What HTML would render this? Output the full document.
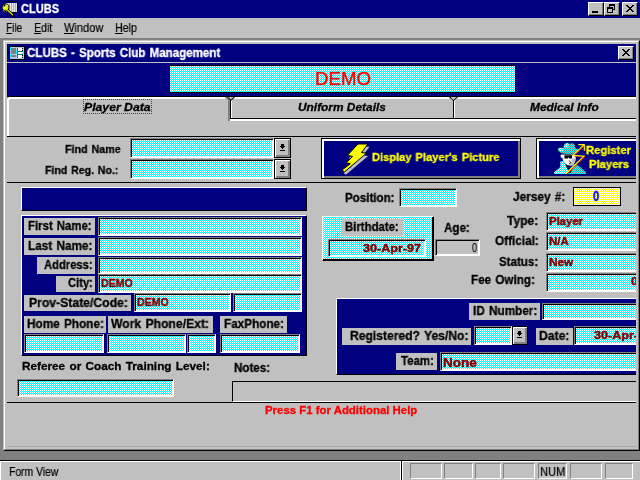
<!DOCTYPE html>
<html><head><meta charset="utf-8"><title>CLUBS</title>
<style>
html,body{margin:0;padding:0}
body{width:640px;height:480px;overflow:hidden;position:relative;background:#808080;font-family:"Liberation Sans",sans-serif;font-size:12.5px;color:#000}
div,span,svg{position:absolute;box-sizing:border-box}
.t{will-change:transform;white-space:nowrap;line-height:1;transform-origin:0 0;font-weight:bold;word-spacing:1px;-webkit-text-stroke:.3px}
.t.r{font-weight:normal;word-spacing:0;-webkit-text-stroke:.2px}
.t.bi{font-style:italic;word-spacing:0}
.t u{text-decoration:underline;text-underline-offset:1px;text-decoration-thickness:1px}
.g{background:#c0c0c0}
.n{background:#000080}
.cy{background:repeating-conic-gradient(#0ff 0% 25%,#fff 0% 50%) 0 0/2px 2px}
.ye{background:repeating-conic-gradient(#ff0 0% 25%,#fff 0% 50%) 0 0/2px 2px}
.f{border:1px solid;border-color:#808080 #fff #fff #808080;box-shadow:inset 1px 1px 0 #000,inset -1px -1px 0 #fff}
.btn{background:#c0c0c0;border:1px solid;border-color:#fff #000 #000 #fff;box-shadow:inset -1px -1px 0 #808080}
.cb{background:#c0c0c0;border:1px solid #000;box-shadow:inset 1px 1px 0 #fff,inset -2px -2px 0 #808080}
.nb{background:#000080;border:1px solid #000;box-shadow:inset 2px 2px 0 #fff,inset -2px -2px 0 #808080}
.np{background:#000080;border:1px solid;border-color:#fff #000 #000 #fff}
.sb{border:1px solid;border-color:#808080 #fff #fff #808080}
.k{background:#000}.w{background:#fff}.dg{background:#808080}
#clip{left:7px;top:44px;width:629px;height:403px;overflow:hidden;background:#c0c0c0}
#clip>div,#clip>svg,#clip>span{margin-left:-7px;margin-top:-44px}
</style></head><body>
<!-- main title bar -->
<div class="n" style="left:0;top:0;width:640px;height:18px"></div>
<svg style="left:0;top:0" width="20" height="18" viewBox="0 0 20 18" shape-rendering="crispEdges">
<rect x="6" y="1" width="12" height="1" fill="#000"/>
<rect x="6" y="3" width="11" height="9" fill="#b0b0b0"/>
<rect x="8" y="3" width="1" height="9" fill="#e4e4e4"/><rect x="10" y="3" width="1" height="9" fill="#e4e4e4"/><rect x="12" y="3" width="1" height="9" fill="#e4e4e4"/><rect x="14" y="3" width="1" height="9" fill="#e4e4e4"/><rect x="16" y="3" width="1" height="9" fill="#e0e0e0"/>
<rect x="17" y="3" width="1" height="10" fill="#000"/><rect x="11" y="12" width="7" height="1" fill="#000"/>
<g shape-rendering="auto">
<path d="M8 10.5L13.5 16" stroke="#000" stroke-width="2.6" stroke-linecap="round"/>
<ellipse cx="5.8" cy="7.6" rx="3.6" ry="3.8" fill="#000"/>
<ellipse cx="5.6" cy="7.3" rx="2.9" ry="3.1" fill="#e8e800"/>
<path d="M7.5 10L12.5 14.8" stroke="#d8d800" stroke-width="1.3" stroke-linecap="round"/>
<path d="M3.2 8.8L7.5 5.2" stroke="#ffffa0" stroke-width="1"/>
<ellipse cx="4.5" cy="5.6" rx="0.9" ry="1.1" fill="#000"/>
<path d="M3 10.5L4.5 11.8" stroke="#b0b000" stroke-width="1"/>
</g></svg>
<div class="btn" style="left:588px;top:2px;width:16px;height:14px"><div class="k" style="left:3px;top:8px;width:6px;height:2px"></div></div>
<div class="btn" style="left:604px;top:2px;width:16px;height:14px">
 <div style="left:4px;top:1px;width:6px;height:6px;border:1px solid #000;border-top-width:2px"></div>
 <div style="left:2px;top:4px;width:6px;height:6px;border:1px solid #000;border-top-width:2px;background:#c0c0c0"></div></div>
<div class="btn" style="left:622px;top:2px;width:16px;height:14px"><svg style="left:3px;top:2px" width="8" height="7" viewBox="0 0 8 7"><path d="M0 0h2v1h1v1h2v-1h1v-1h2v1h-1v1h-1v1h-1v1h1v1h1v1h1v1h-2v-1h-1v-1h-2v1h-1v1h-2v-1h1v-1h1v-1h1v-1h-1v-1h-1v-1h-1z" fill="#000"/></svg></div>
<!-- menu bar -->
<div class="g" style="left:0;top:18px;width:640px;height:20px"></div>
<!-- child window frame -->
<div style="left:3px;top:40px;width:637px;height:411px;border:1px solid;border-color:#c0c0c0 #000 #000 #c0c0c0;background:#c0c0c0"></div>
<div style="left:4px;top:41px;width:635px;height:409px;border:1px solid;border-color:#fff #808080 #808080 #fff"></div>
<div id="clip">
 <!-- child title -->
 <div class="n" style="left:7px;top:44px;width:629px;height:18px"></div>
 <svg style="left:9px;top:46px" width="16" height="14" viewBox="0 0 16 14" shape-rendering="crispEdges">
<rect x="0" y="0" width="16" height="14" fill="#000"/>
<rect x="1" y="1" width="14" height="12" fill="#a6caf0"/>
<rect x="1" y="1" width="1" height="3" fill="#0ff"/><rect x="1" y="8" width="1" height="3" fill="#0ff"/>
<rect x="2" y="2" width="5" height="6" fill="#808080"/>
<rect x="2" y="9" width="5" height="2" fill="#808080"/>
<rect x="7" y="5" width="1" height="3" fill="#0ff"/>
<rect x="8" y="2" width="1" height="10" fill="#008080"/>
<rect x="8" y="5" width="6" height="1" fill="#008080"/>
<rect x="8" y="8" width="6" height="1" fill="#008080"/>
<rect x="9" y="2" width="4" height="3" fill="#fff"/>
<rect x="9" y="6" width="4" height="2" fill="#fff"/>
<rect x="9" y="9" width="4" height="3" fill="#fff"/>
<rect x="13" y="2" width="1" height="1" fill="#000"/><rect x="13" y="4" width="1" height="1" fill="#000"/><rect x="13" y="9" width="1" height="1" fill="#000"/><rect x="13" y="11" width="1" height="1" fill="#000"/>
</svg>
 <div class="btn" style="left:618px;top:46px;width:16px;height:14px"><svg style="left:3px;top:2px" width="8" height="7" viewBox="0 0 8 7"><path d="M0 0h2v1h1v1h2v-1h1v-1h2v1h-1v1h-1v1h-1v1h1v1h1v1h1v1h-2v-1h-1v-1h-2v1h-1v1h-2v-1h1v-1h1v-1h1v-1h-1v-1h-1v-1h-1z" fill="#000"/></svg></div>
 <!-- form header -->
 <div class="n" style="left:7px;top:63px;width:629px;height:33px"></div>
 <div class="k" style="left:7px;top:96px;width:629px;height:1px"></div>
 <div class="cy" style="left:169px;top:65px;width:347px;height:28px;border:1px solid #000"></div>
 <!-- tabs -->
 <div class="w" style="left:9px;top:97px;width:217px;height:2px"></div>
 <div class="w" style="left:7px;top:99px;width:2px;height:37px"></div>
 <div class="w" style="left:8px;top:98px;width:2px;height:2px"></div>
 <div class="dg" style="left:228px;top:100px;width:2px;height:21px"></div>
 <div class="k" style="left:230px;top:100px;width:1px;height:19px"></div>
 <div class="w" style="left:231px;top:100px;width:1px;height:18px"></div>
 <div class="w" style="left:233px;top:97px;width:217px;height:2px"></div>
 <div class="k" style="left:230px;top:118px;width:406px;height:1px"></div>
 <div class="w" style="left:230px;top:119px;width:406px;height:2px"></div>
 <div class="k" style="left:453px;top:100px;width:1px;height:19px"></div>
 <div class="w" style="left:454px;top:100px;width:1px;height:18px"></div>
 <div class="w" style="left:457px;top:97px;width:179px;height:2px"></div>
 <svg style="left:225px;top:97px" width="10" height="4" viewBox="0 0 10 4"><path d="M0 0h9v2h-9z" fill="#c0c0c0"/><path d="M0 0h2l3 3v1h-2v-1z" fill="#808080"/><path d="M2 0h1.4l2.6 2.6l2.6-2.6h1.4l-3.5 3.5h-1z" fill="#000"/><path d="M3.4 0h5.2l-2.6 2.6z" fill="#c0c0c0"/></svg>
 <svg style="left:448px;top:97px" width="10" height="4" viewBox="0 0 10 4"><path d="M1 0h8.6v2h-8.6z" fill="#c0c0c0"/><path d="M1.2 0h1.4l2.9 2.9l2.9-2.9h1.4l-3.8 3.8h-1z" fill="#000"/><path d="M2.6 0h5.8l-2.9 2.9z" fill="#c0c0c0"/></svg>
 <div style="left:83px;top:99px;width:69px;height:15px;border:1px dotted #404040"></div>
 <div class="k" style="left:7px;top:136px;width:629px;height:1px"></div>
 <!-- find combos -->
 <div class="f cy" style="left:130px;top:138px;width:144px;height:20px"></div>
 <div class="cb" style="left:274px;top:138px;width:17px;height:20px"><svg style="left:5px;top:5px" width="5" height="7" viewBox="0 0 5 7" shape-rendering="crispEdges"><path d="M1 0h3v2h1v1h-1v1h-1v1h-1v-1h-1v-1h-1v-1h1zM0 6h5v1h-5z" fill="#000"/></svg></div>
 <div class="f cy" style="left:130px;top:159px;width:144px;height:20px"></div>
 <div class="cb" style="left:274px;top:159px;width:17px;height:20px"><svg style="left:5px;top:5px" width="5" height="7" viewBox="0 0 5 7" shape-rendering="crispEdges"><path d="M1 0h3v2h1v1h-1v1h-1v1h-1v-1h-1v-1h-1v-1h1zM0 6h5v1h-5z" fill="#000"/></svg></div>
 <!-- big buttons -->
 <div class="nb" style="left:321px;top:138px;width:200px;height:41px"></div>
 <div class="nb" style="left:536px;top:138px;width:120px;height:41px"></div>
 <svg style="left:336px;top:140px" width="40" height="38" viewBox="336 140 40 38">
<polygon points="358,144 368,144 361.5,152.5 366.5,153.2 344.4,172 342,170 350.3,163.8 346.3,162.8 352.6,156.4 347.3,155.4" fill="#c0c0c0" transform="translate(1.5,2.8)"/>
<polygon points="358,144 368,144 361.5,152.5 366.5,153.2 344.4,172 342,170 350.3,163.8 346.3,162.8 352.6,156.4 347.3,155.4" fill="#ff0" stroke="#000" stroke-width="1" stroke-linejoin="miter"/>
</svg>
 <svg style="left:550px;top:138px" width="44" height="40" viewBox="550 138 44 40">
<defs><pattern id="cyp" width="2" height="2" patternUnits="userSpaceOnUse"><rect width="2" height="2" fill="#0ff"/><rect width="1" height="1" fill="#fff"/><rect x="1" y="1" width="1" height="1" fill="#fff"/></pattern>
<pattern id="cyd" width="2" height="2" patternUnits="userSpaceOnUse"><rect width="2" height="2" fill="#0ff"/><rect width="1" height="1" fill="#6a8a8a"/><rect x="1" y="1" width="1" height="1" fill="#6a8a8a"/></pattern></defs>
<path d="M554.2 174L554.2 172L557 170L560.3 167L560.3 161.5L563 161L566 165L569.5 172L568.5 174Z" fill="url(#cyp)"/>
<path d="M568.5 174L570.5 168L573 165.5L576 164L580 167L584 170.5L586 172.3L586 174Z" fill="url(#cyd)"/>
<path d="M560.6 155L562 154.6L575 154.6L575.8 158L575 162L573 165.2L568.5 165.5L565 163.5L563 160.5L562.5 158L560.8 157.5Z" fill="#fff"/>
<path d="M572 158.5L575.8 158L575 162L573 165.2L570.5 165.4L571.5 161Z" fill="#c0c0c0"/>
<path d="M564.4 155.3h7.6v3.2h-2.6l-.8-1.2l-.8 1.2h-3.4z" fill="#000"/>
<path d="M569.2 160.5L570.8 163.2L569 163.8M568 166.2L570 166.2" stroke="#000" stroke-width=".8" fill="none"/>
<path d="M566 165L569.6 172.8M573.2 165.6L570.2 172.8" stroke="#000" stroke-width=".9" fill="none"/>
<path d="M557.6 148.8L559 147.6L563.3 147.5L564 144.5L565.5 143L568 142.8L569.5 144L571 143L573.5 143.2L575 145L575.5 148L578.5 149L579.5 150.5L578 152.5L574 154L566 154.4L561 153.2L558 151.2Z" fill="url(#cyd)" stroke="#000" stroke-width=".5"/>
<path d="M564 147.2L564.6 144.6L566 143.4L568 143.3L569 144.6L568 147.6ZM558.2 149L560 148.1L564 148.5L563 151L559.6 150.9Z" fill="url(#cyp)"/>
<path d="M566 173.5L584 156.2L573 155.2L583.8 144.8" stroke="#f00" stroke-width="1" fill="none" transform="translate(.95,.55)"/>
<path d="M585.1 145.5L585.1 151.2" stroke="#f00" stroke-width="1" fill="none"/>
<path d="M566 173.5L584 156.2L573 155.2L583.8 144.8M578.3 144.6L584.3 144.6L584.3 150.8" stroke="#ff0" stroke-width="1.1" fill="none"/>
</svg>
 <div class="k" style="left:7px;top:182px;width:629px;height:1px"></div>
 <!-- left navy bar + panel -->
 <div class="np" style="left:21px;top:187px;width:286px;height:24px"></div>
 <div class="np" style="left:21px;top:215px;width:286px;height:141px"></div>
 <div class="g" style="left:24px;top:218px;width:71px;height:17px"></div>
 <div class="f cy" style="left:98px;top:217px;width:204px;height:19px"></div>
 <div class="g" style="left:24px;top:238px;width:71px;height:17px"></div>
 <div class="f cy" style="left:98px;top:237px;width:204px;height:19px"></div>
 <div class="g" style="left:37px;top:257px;width:58px;height:17px"></div>
 <div class="f cy" style="left:98px;top:257px;width:204px;height:17px"></div>
 <div class="g" style="left:56px;top:276px;width:39px;height:16px"></div>
 <div class="f cy" style="left:98px;top:274px;width:204px;height:19px"></div>
 <div class="g" style="left:24px;top:295px;width:107px;height:16px"></div>
 <div class="f cy" style="left:134px;top:293px;width:97px;height:19px"></div>
 <div class="f cy" style="left:233px;top:293px;width:69px;height:19px"></div>
 <div class="g" style="left:24px;top:316px;width:82px;height:17px"></div>
 <div class="g" style="left:108px;top:316px;width:105px;height:17px"></div>
 <div class="g" style="left:220px;top:316px;width:67px;height:17px"></div>
 <div class="f cy" style="left:24px;top:334px;width:80px;height:19px"></div>
 <div class="f cy" style="left:107px;top:334px;width:79px;height:19px"></div>
 <div class="f cy" style="left:187px;top:334px;width:29px;height:19px"></div>
 <div class="f cy" style="left:220px;top:334px;width:80px;height:19px"></div>
 <!-- right upper -->
 <div class="f cy" style="left:399px;top:188px;width:58px;height:19px"></div>
 <div class="ye" style="left:573px;top:187px;width:48px;height:19px;border:1px solid #000"></div>
 <div class="cy" style="left:322px;top:216px;width:112px;height:45px;border:1px solid;border-color:#fff #000 #000 #fff;box-shadow:inset -1px -1px 0 #000"></div>
 <div class="g" style="left:341px;top:219px;width:62px;height:17px"></div>
 <div class="f cy" style="left:328px;top:239px;width:98px;height:18px"></div>
 <div class="f g" style="left:435px;top:239px;width:45px;height:17px"></div>
 <div class="f cy" style="left:546px;top:212px;width:110px;height:19px"></div>
 <div class="f cy" style="left:546px;top:232px;width:110px;height:19px"></div>
 <div class="f cy" style="left:546px;top:253px;width:110px;height:19px"></div>
 <div class="f cy" style="left:546px;top:273px;width:110px;height:19px"></div>
 <!-- right navy panel -->
 <div class="np" style="left:336px;top:298px;width:320px;height:77px"></div>
 <div class="g" style="left:469px;top:303px;width:71px;height:17px"></div>
 <div class="f cy" style="left:542px;top:303px;width:110px;height:17px"></div>
 <div class="g" style="left:342px;top:328px;width:129px;height:17px"></div>
 <div class="f cy" style="left:474px;top:326px;width:38px;height:19px"></div>
 <div class="cb" style="left:512px;top:326px;width:16px;height:19px"><svg style="left:4px;top:4px" width="5" height="7" viewBox="0 0 5 7" shape-rendering="crispEdges"><path d="M1 0h3v2h1v1h-1v1h-1v1h-1v-1h-1v-1h-1v-1h1zM0 6h5v1h-5z" fill="#000"/></svg></div>
 <div class="g" style="left:536px;top:328px;width:37px;height:17px"></div>
 <div class="f cy" style="left:574px;top:326px;width:80px;height:19px"></div>
 <div class="g" style="left:396px;top:353px;width:41px;height:17px"></div>
 <div class="f cy" style="left:440px;top:352px;width:214px;height:19px"></div>
 <!-- bottom -->
 <div class="f cy" style="left:17px;top:379px;width:157px;height:18px"></div>
 <div class="g" style="left:232px;top:381px;width:420px;height:21px;border:1px solid;border-color:#000 #fff #fff #000"></div>
 <div class="k" style="left:7px;top:402px;width:629px;height:1px"></div>
 <div style="left:7px;top:446px;width:629px;height:1px;background:#a8a8a8"></div>
<span class="t b" id="t5" style="left:27.00px;top:47.00px;font-size:12.5px;color:#fff;transform:scaleX(0.9252);">CLUBS - Sports Club Management</span>
<span class="t r" id="t6" style="left:314.60px;top:70.00px;font-size:18.5px;color:#f00;transform:scaleX(1.0082);-webkit-text-stroke:.45px #f00;">DEMO</span>
<span class="t bi" id="t7" style="left:84.40px;top:102.00px;font-size:11.5px;transform:scaleX(1.0631);">Player Data</span>
<span class="t bi" id="t8" style="left:297.80px;top:102.00px;font-size:11.5px;transform:scaleX(1.0336);">Uniform Details</span>
<span class="t bi" id="t9" style="left:530.00px;top:102.00px;font-size:11.5px;transform:scaleX(1.0350);">Medical Info</span>
<span class="t b" id="t10" style="left:65.00px;top:144.00px;font-size:11.5px;transform:scaleX(0.9300);">Find Name</span>
<span class="t b" id="t11" style="left:44.50px;top:165.00px;font-size:11.5px;transform:scaleX(0.9174);">Find Reg. No.:</span>
<span class="t b" id="t12" style="left:371.75px;top:152.00px;font-size:11.5px;color:#ff0;transform:scaleX(0.9659);">Display Player's Picture</span>
<span class="t b" id="t13" style="left:586.10px;top:145.00px;font-size:11.5px;color:#ff0;transform:scaleX(0.9777);">Register</span>
<span class="t b" id="t14" style="left:589.00px;top:159.00px;font-size:11.5px;color:#ff0;transform:scaleX(0.9789);">Players</span>
<span class="t b" id="t15" style="left:344.75px;top:192.00px;font-size:12.5px;transform:scaleX(0.9252);">Position:</span>
<span class="t b" id="t16" style="left:513.00px;top:191.00px;font-size:12.5px;transform:scaleX(0.9486);">Jersey #:</span>
<span class="t b" id="t17" style="left:593.00px;top:189.00px;font-size:14px;color:#00f;transform:scaleX(0.7910);">0</span>
<span class="t b" id="t18" style="left:345.25px;top:221.00px;font-size:12.5px;transform:scaleX(0.9098);">Birthdate:</span>
<span class="t b" id="t19" style="left:363.10px;top:243.00px;font-size:11.5px;color:#800000;-webkit-text-stroke:.5px;transform:scaleX(1.0934);">30-Apr-97</span>
<span class="t b" id="t20" style="left:444.00px;top:222.00px;font-size:12.5px;transform:scaleX(0.9300);">Age:</span>
<span class="t r" id="t21" style="left:472.00px;top:242.00px;font-size:12.5px;transform:scaleX(0.7265);">0</span>
<span class="t b" id="t22" style="left:507.00px;top:215.00px;font-size:12.5px;transform:scaleX(0.9621);">Type:</span>
<span class="t b" id="t23" style="left:494.50px;top:235.00px;font-size:12.5px;transform:scaleX(0.9412);">Official:</span>
<span class="t b" id="t24" style="left:498.75px;top:256.00px;font-size:12.5px;transform:scaleX(0.9242);">Status:</span>
<span class="t b" id="t25" style="left:471.00px;top:274.00px;font-size:12.5px;transform:scaleX(0.9339);">Fee Owing:</span>
<span class="t b" id="t26" style="left:548.75px;top:216.00px;font-size:11.5px;color:#800000;-webkit-text-stroke:.5px;transform:scaleX(0.9812);">Player</span>
<span class="t b" id="t27" style="left:549.00px;top:236.00px;font-size:11.5px;color:#800000;-webkit-text-stroke:.5px;transform:scaleX(0.9951);">N/A</span>
<span class="t b" id="t28" style="left:549.00px;top:257.00px;font-size:11.5px;color:#800000;-webkit-text-stroke:.5px;transform:scaleX(1.0254);">New</span>
<span class="t b" id="t29" style="left:630.75px;top:276.00px;font-size:11.5px;color:#800000;-webkit-text-stroke:.5px;transform:scaleX(1.0512);">0</span>
<span class="t b" id="t30" style="left:27.75px;top:220.00px;font-size:12.5px;transform:scaleX(0.9117);">First Name:</span>
<span class="t b" id="t31" style="left:27.75px;top:240.00px;font-size:12.5px;transform:scaleX(0.9413);">Last Name:</span>
<span class="t b" id="t32" style="left:44.25px;top:259.00px;font-size:12.5px;transform:scaleX(0.8969);">Address:</span>
<span class="t b" id="t33" style="left:67.50px;top:277.00px;font-size:12.5px;transform:scaleX(0.8928);">City:</span>
<span class="t b" id="t34" style="left:28.50px;top:297.00px;font-size:12.5px;transform:scaleX(0.9750);">Prov-State/Code:</span>
<span class="t b" id="t35" style="left:101.00px;top:278.00px;font-size:11.5px;color:#800000;-webkit-text-stroke:.5px;transform:scaleX(0.9213);">DEMO</span>
<span class="t b" id="t36" style="left:136.60px;top:297.00px;font-size:11.5px;color:#800000;-webkit-text-stroke:.5px;transform:scaleX(0.9213);">DEMO</span>
<span class="t b" id="t37" style="left:26.50px;top:318.00px;font-size:12.5px;transform:scaleX(0.9426);">Home Phone:</span>
<span class="t b" id="t38" style="left:111.25px;top:318.00px;font-size:12.5px;transform:scaleX(0.9725);">Work Phone/Ext:</span>
<span class="t b" id="t39" style="left:223.50px;top:318.00px;font-size:12.5px;transform:scaleX(0.9381);">FaxPhone:</span>
<span class="t b" id="t40" style="left:22.00px;top:361.00px;font-size:11.5px;transform:scaleX(1.0230);">Referee or Coach Training Level:</span>
<span class="t b" id="t41" style="left:234.20px;top:362.00px;font-size:12.5px;transform:scaleX(0.9276);">Notes:</span>
<span class="t b" id="t42" style="left:472.50px;top:305.00px;font-size:12.5px;transform:scaleX(0.9405);">ID Number:</span>
<span class="t b" id="t43" style="left:349.80px;top:330.00px;font-size:12.5px;transform:scaleX(0.9682);">Registered? Yes/No:</span>
<span class="t b" id="t44" style="left:539.00px;top:330.00px;font-size:12.5px;transform:scaleX(0.9733);">Date:</span>
<span class="t b" id="t45" style="left:593.75px;top:330.00px;font-size:11.5px;color:#800000;-webkit-text-stroke:.5px;transform:scaleX(1.0934);">30-Apr-97</span>
<span class="t b" id="t46" style="left:400.50px;top:355.00px;font-size:12.5px;transform:scaleX(0.9161);">Team:</span>
<span class="t b" id="t47" style="left:442.50px;top:356.00px;font-size:13.5px;color:#800000;-webkit-text-stroke:.5px;transform:scaleX(1.0045);">None</span>
<span class="t b" id="t48" style="left:264.50px;top:405.00px;font-size:11px;color:#f00;transform:scaleX(1.0366);word-spacing:0;">Press F1 for Additional Help</span>
</div>
<!-- status bar -->
<div class="k" style="left:0;top:460px;width:640px;height:1px"></div>
<div class="g" style="left:0;top:461px;width:640px;height:19px"></div>
<div class="w" style="left:0;top:461px;width:401px;height:1px"></div>
<div class="w" style="left:0;top:461px;width:1px;height:19px"></div>
<div class="w" style="left:400px;top:461px;width:1px;height:19px"></div>
<div class="k" style="left:401px;top:461px;width:1px;height:19px"></div>
<div class="w" style="left:402px;top:461px;width:238px;height:1px"></div>
<div class="w" style="left:402px;top:461px;width:1px;height:19px"></div>
<div class="sb" style="left:410px;top:463px;width:32px;height:16px"></div>
<div class="sb" style="left:444px;top:463px;width:29px;height:16px"></div>
<div class="sb" style="left:475px;top:463px;width:26px;height:16px"></div>
<div class="sb" style="left:503px;top:463px;width:32px;height:16px"></div>
<div class="sb" style="left:538px;top:463px;width:29px;height:16px"></div>
<div class="sb" style="left:570px;top:463px;width:32px;height:16px"></div>
<div class="sb" style="left:605px;top:463px;width:28px;height:16px"></div>
<span class="t b" id="t0" style="left:21.00px;top:3.00px;font-size:12.5px;color:#fff;transform:scaleX(0.8835);">CLUBS</span>
<span class="t r" id="t1" style="left:5.90px;top:22.00px;font-size:12.5px;transform:scaleX(0.7979);"><u>F</u>ile</span>
<span class="t r" id="t2" style="left:33.90px;top:22.00px;font-size:12.5px;transform:scaleX(0.8510);"><u>E</u>dit</span>
<span class="t r" id="t3" style="left:63.70px;top:22.00px;font-size:12.5px;transform:scaleX(0.8837);"><u>W</u>indow</span>
<span class="t r" id="t4" style="left:114.70px;top:22.00px;font-size:12.5px;transform:scaleX(0.8525);"><u>H</u>elp</span>
<span class="t r" id="t49" style="left:9.00px;top:466.00px;font-size:12.5px;transform:scaleX(0.8285);">Form View</span>
<span class="t r" id="t50" style="left:539.50px;top:466.00px;font-size:12.5px;transform:scaleX(0.8928);">NUM</span>
</body></html>
